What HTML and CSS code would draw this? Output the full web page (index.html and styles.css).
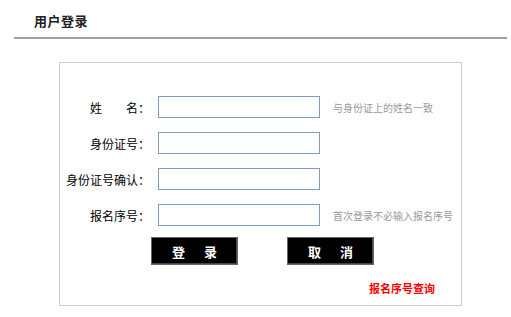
FILE: index.html
```html
<!DOCTYPE html>
<html lang="zh-CN">
<head>
    <meta charset="UTF-8">
    <meta name="viewport" content="width=device-width, initial-scale=1.0">
    <title>用户登录</title>
    <link rel="stylesheet" href="styles.css">
</head>
<body>
    <div class="header">
        <h2>用户登录</h2>
    </div>
    <div class="line"></div>

    <div class="login-box">
        <div class="row">
            <label for="xm">姓　　名：</label>
            <input type="text" id="xm">
            <span class="hint">与身份证上的姓名一致</span>
        </div>
        <div class="row">
            <label for="sfz">身份证号：</label>
            <input type="text" id="sfz">
            <span class="hint"></span>
        </div>
        <div class="row">
            <label for="sfz2">身份证号确认：</label>
            <input type="text" id="sfz2">
            <span class="hint"></span>
        </div>
        <div class="row">
            <label for="bmxh">报名序号：</label>
            <input type="text" id="bmxh">
            <span class="hint">首次登录不必输入报名序号</span>
        </div>

        <div class="buttons">
            <button type="button" class="btn">登　录</button>
            <button type="button" class="btn">取　消</button>
        </div>

        <div class="query">
            <a href="#">报名序号查询</a>
        </div>
    </div>
</body>
</html>
```

FILE: styles.css
```css
body {
    margin: 0;
    padding: 0;
    background: #fff;
    font-family: "Noto Sans CJK SC", "DejaVu Sans", sans-serif;
    font-size: 12px;
    color: #000;
    width: 511px;
    height: 317px;
    overflow: hidden;
}

.header {
    padding: 11px 0 0 34px;
    height: 26px;
}

.header h2 {
    margin: 0;
    font-size: 13px;
    line-height: 20px;
    font-weight: bold;
    letter-spacing: 0.5px;
    color: #222;
}

.line {
    height: 2px;
    margin: 0 4px 0 14px;
    background: #a0a0a0;
}

.login-box {
    margin: 23px 0 0 59px;
    width: 401px;
    height: 209px;
    border: 1px solid #ccc;
    padding-top: 33px;
}

.row {
    display: grid;
    grid-template-columns: 90px 162px auto;
    column-gap: 8px;
    align-items: center;
    height: 22px;
    margin-bottom: 14px;
}

.row label {
    text-align: right;
    font-size: 12px;
    white-space: nowrap;
}

.row input {
    width: 162px;
    height: 22px;
    box-sizing: border-box;
    border: 1px solid #7f9db9;
    padding: 0 3px;
    margin: 0;
    outline: none;
}

.hint {
    font-size: 10px;
    color: #999;
    padding-left: 5px;
    white-space: nowrap;
}

.row:last-of-type .hint {
    padding-left: 4px;
}

.buttons {
    display: flex;
    gap: 49px;
    padding-left: 91px;
    margin-top: -3px;
}

.btn {
    width: 87px;
    height: 28px;
    background: #000;
    color: #fff;
    border: 1px solid #666;
    box-shadow: inset -1px -1px 0 #444;
    font-family: "Noto Sans CJK SC", sans-serif;
    font-size: 13px;
    font-weight: bold;
    letter-spacing: 3px;
    padding: 0 0 0 3px;
    cursor: pointer;
}

.query {
    text-align: right;
    padding-right: 26px;
    margin-top: 14px;
}

.query a {
    color: #f00;
    font-size: 11px;
    font-weight: bold;
    text-decoration: none;
}
```
